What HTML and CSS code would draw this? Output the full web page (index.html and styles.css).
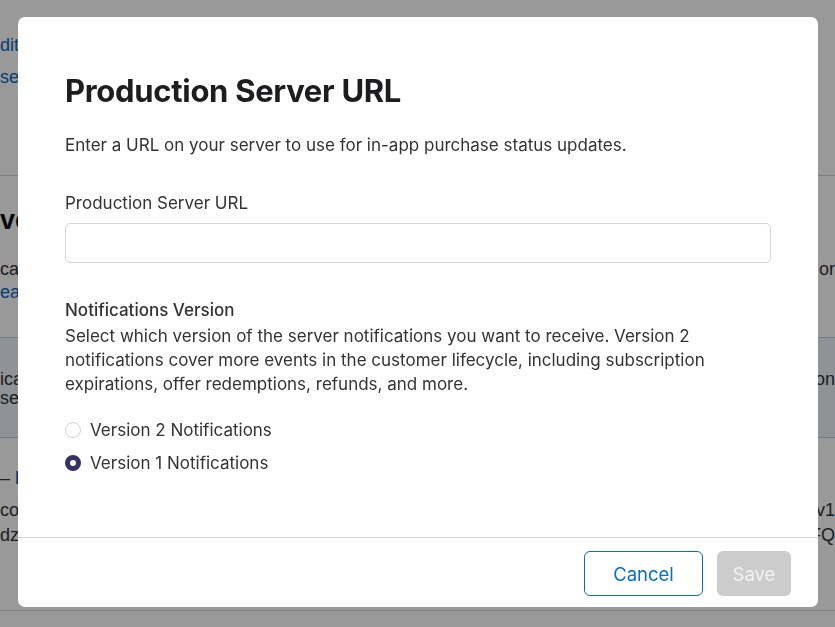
FILE: index.html
```html
<!DOCTYPE html>
<html lang="en">
<head>
<meta charset="utf-8">
<title>Production Server URL</title>
<link rel="stylesheet" href="styles.css">
</head>
<body>
<div class="page">
  <section class="sec-top">
    <div class="row r1"><a class="link">dit</a></div>
    <div class="row r2"><a class="link">se</a></div>
  </section>
  <section class="sec-mid">
    <div class="row r3"><h2 class="bg-head">ve</h2></div>
    <div class="row r4"><span class="dark">cat</span><span class="dark">or</span></div>
    <div class="row r5"><a class="link">ear</a></div>
    <div class="info">
      <div class="row r6"><span class="dark">ica</span><span class="dark">on</span></div>
      <div class="row r7"><span class="dark">se</span></div>
    </div>
    <div class="row r8"><span class="dark dash">–&nbsp;<b class="link">I</b></span></div>
    <div class="row r9"><span class="dark">co</span><span class="dark">/v1</span></div>
    <div class="row r10"><span class="dark">dzS</span><span class="dark">FQ</span></div>
  </section>
  <section class="sec-bottom"></section>
</div>

<div class="overlay">
  <div class="modal" role="dialog" aria-labelledby="mtitle">
    <div class="modal-body">
      <h1 id="mtitle" class="title">Production Server URL</h1>
      <p class="desc">Enter a URL on your server to use for in-app purchase status updates.</p>
      <label class="field-label" for="url">Production Server URL</label>
      <input id="url" class="field" type="text">
      <h3 class="group-title">Notifications Version</h3>
      <p class="group-desc">Select which version of the server notifications you want to receive. Version 2 notifications cover more events in the customer lifecycle, including subscription expirations, offer redemptions, refunds, and more.</p>
      <div class="radios">
        <label class="radio"><span class="dot"></span>Version 2 Notifications</label>
        <label class="radio"><span class="dot checked"></span>Version 1 Notifications</label>
      </div>
    </div>
    <div class="modal-footer">
      <button class="btn btn-cancel">Cancel</button>
      <button class="btn btn-save">Save</button>
    </div>
  </div>
</div>
</body>
</html>
```
FILE: styles.css
```css
* { box-sizing: border-box; }
html, body { margin: 0; padding: 0; }
body {
  width: 835px;
  height: 627px;
  overflow: hidden;
  background: #fff;
  font-family: "Inter", "Liberation Sans", sans-serif;
  color: #1d1d1f;
}

/* background page (dimmed by the overlay) */
.page {
  font-family: "Liberation Sans", Arial, sans-serif;
  font-size: 18px;
}
.row {
  display: flex;
  justify-content: space-between;
  align-items: center;
  height: 24px;
  line-height: 24px;
}
.link { color: #0866c6; text-decoration: none; }
.dark { color: #333; }
.sec-top { padding-top: 33px; height: 176px; border-bottom: 1px solid #d2d2d7; }
.r2 { margin-top: 8px; }
.sec-mid { padding-top: 29px; }
.bg-head { margin: 0; font-size: 27px; font-weight: 700; color: #111; line-height: 30px; }
.r3 { height: 30px; }
.r4 { margin-top: 22px; }
.r5 { margin-top: -1px; }
.info {
  margin-top: 33px;
  height: 101px;
  background: #eef3fa;
  border-top: 1px solid #b8d3ef;
  border-bottom: 1px solid #b8d3ef;
  padding-top: 29px;
}
.r7 { margin-top: -5px; }
.r8 { margin-top: 28px; }
.r9 { margin-top: 8px; }
.r10 { margin-top: 1px; }
.dash b { font-weight: 700; }
.sec-bottom { margin-top: 63px; border-top: 1px solid #d2d2d7; }

/* overlay + modal */
.overlay {
  position: fixed;
  inset: 0;
  background: rgba(0, 0, 0, 0.4);
  display: flex;
  align-items: flex-start;
  padding: 17px 17px 0 18px;
}
.modal {
  width: 800px;
  height: 590px;
  background: #fff;
  border-radius: 7px;
  display: flex;
  flex-direction: column;
  overflow: hidden;
}
.modal-body {
  flex: 1;
  padding: 56px 47px 0 47px;
}
.title {
  margin: 0;
  font-size: 31px;
  line-height: 36px;
  font-weight: 700;
  letter-spacing: -0.3px;
  color: #1d1d1f;
}
.desc {
  margin: 24px 0 0;
  font-size: 17px;
  line-height: 24px;
  color: #333;
}
.field-label {
  display: block;
  margin-top: 34px;
  font-size: 17px;
  line-height: 24px;
  color: #333;
}
.field {
  display: block;
  width: 100%;
  height: 40px;
  margin-top: 8px;
  border: 1px solid #d6d6d6;
  border-radius: 5px;
  background: #fff;
  outline: none;
}
.group-title {
  margin: 35px 0 0;
  font-size: 17px;
  line-height: 24px;
  font-weight: 500;
  color: #333;
}
.group-desc {
  margin: 2px 0 0;
  font-size: 17px;
  line-height: 24px;
  color: #333;
}
.radios {
  margin-top: 22px;
  display: flex;
  flex-direction: column;
  gap: 9px;
}
.radio {
  display: flex;
  align-items: center;
  gap: 9px;
  font-size: 17px;
  line-height: 24px;
  color: #333;
}
.dot {
  width: 16px;
  height: 16px;
  border-radius: 50%;
  border: 1px solid #d2d2d2;
  background: #fff;
  flex: none;
}
.dot.checked {
  border: 5px solid #333366;
  background: #fff;
}
.modal-footer {
  border-top: 1px solid #d6d6d6;
  height: 70px;
  display: flex;
  justify-content: flex-end;
  gap: 14px;
  padding: 13px 27px 0 0;
}
.btn {
  height: 45px;
  border-radius: 6px;
  font-family: "Inter", "Liberation Sans", sans-serif;
  font-size: 18.5px;
  padding: 0;
}
.btn-cancel {
  width: 119px;
  background: #fff;
  border: 1px solid #0070c9;
  color: #0070c9;
}
.btn-save {
  width: 74px;
  background: #cccccc;
  border: none;
  color: #f2f2f2;
}
```
